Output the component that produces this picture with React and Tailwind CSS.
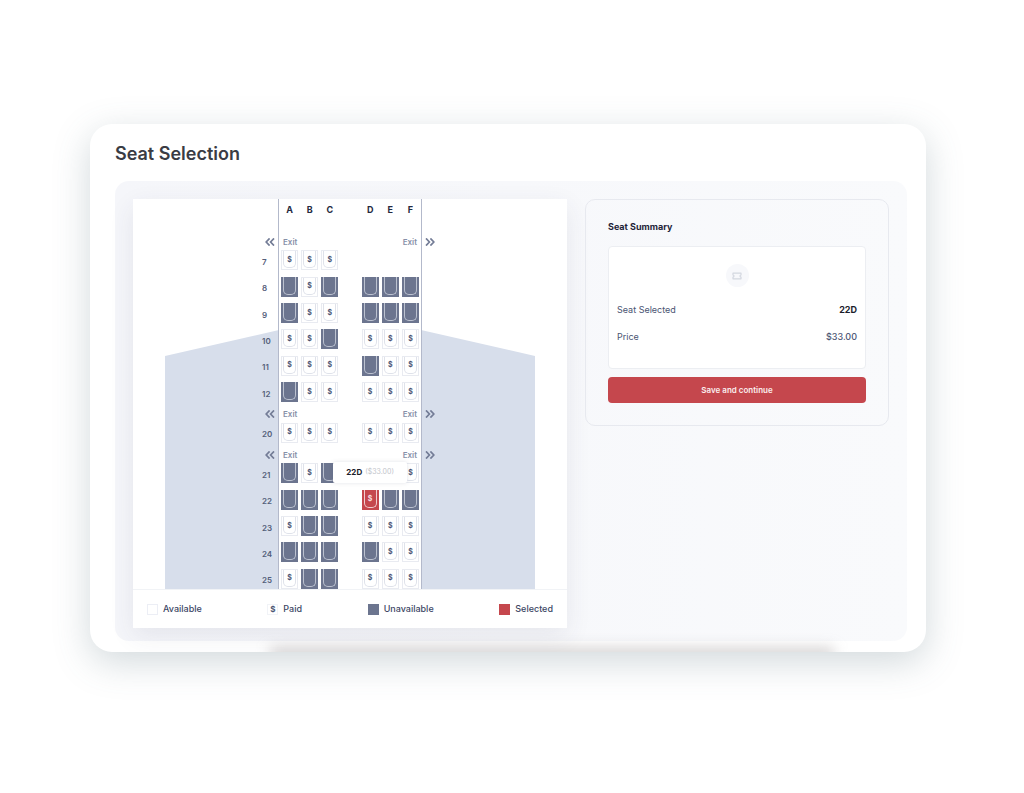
import React, { useState } from 'react';
import clsx from 'clsx';

const COLUMNS = ['A', 'B', 'C', null, 'D', 'E', 'F'];
const PRICE = '$33.00';

// p = paid, x = unavailable, - = no seat
const LAYOUT = [
  { exit: true },
  { row: 7, seats: 'ppp ---' },
  { row: 8, seats: 'xpx xxx' },
  { row: 9, seats: 'xpp xxx' },
  { row: 10, seats: 'ppx ppp' },
  { row: 11, seats: 'ppp xpp' },
  { row: 12, seats: 'xpp ppp' },
  { exit: true },
  { row: 20, seats: 'ppp ppp' },
  { exit: true },
  { row: 21, seats: 'xpx xpp' },
  { row: 22, seats: 'xxx pxx' },
  { row: 23, seats: 'pxx ppp' },
  { row: 24, seats: 'xxx xpp' },
  { row: 25, seats: 'pxx ppp' }
];

const LEGEND = [
  { label: 'Available', swatch: 'border border-[#eceef5] bg-white' },
  { label: 'Paid', swatch: 'border border-[#f1f3f7] bg-white text-[#4b5573]', symbol: '$' },
  { label: 'Unavailable', swatch: 'bg-[#6c758f]' },
  { label: 'Selected', swatch: 'bg-[#c5474d]' }
];

const Chevrons = ({ flip }) => (
  <svg viewBox="0 0 10 8" className={clsx('h-2 w-[10px] shrink-0', flip && 'rotate-180')} aria-hidden="true">
    <path d="M4.6 0.4 1.2 4l3.4 3.6M9 0.4 5.6 4 9 7.6" fill="none" stroke="#737c96" strokeWidth="1.7" />
  </svg>
);

const Wings = () => (
  <>
    <svg
      viewBox="0 0 114 259"
      preserveAspectRatio="none"
      className="absolute bottom-0 right-1/2 mr-[71px] h-[259px] w-[114px]"
      aria-hidden="true"
    >
      <path d="M0 26 114 0v259H0z" fill="#d7deeb" />
    </svg>
    <svg
      viewBox="0 0 114 259"
      preserveAspectRatio="none"
      className="absolute bottom-0 left-1/2 ml-[71px] h-[259px] w-[114px]"
      aria-hidden="true"
    >
      <path d="M0 0 114 26v233H0z" fill="#d7deeb" />
    </svg>
    <div className="absolute inset-y-0 left-1/2 w-[144px] -translate-x-1/2 border-x border-[#b3b9cb] bg-white" />
  </>
);

const SeatTooltip = ({ id }) => (
  <span className="absolute bottom-full left-1/2 z-10 mb-[7px] flex h-[21px] w-[74px] -translate-x-1/2 items-center justify-center gap-[3px] whitespace-nowrap rounded-xs bg-white text-[#1b1d2b] shadow-[0_0_4px_rgba(60,70,100,0.15)]">
    <span className="text-[8px] font-bold">{id}</span>
    <span className="text-[7px] text-[#c3c5cb]">({PRICE})</span>
  </span>
);

const Seat = ({ id, status, selected, onSelect }) => {
  if (status === '-') return <span className="w-[17px]" />;

  const taken = status === 'x';
  return (
    <button
      type="button"
      aria-label={`Seat ${id}`}
      aria-pressed={selected}
      disabled={taken}
      onClick={() => onSelect(id)}
      className={clsx(
        'relative flex h-5 w-[17px] justify-center',
        selected && 'bg-[#c5474d] text-[#f6dfe0]',
        taken && 'bg-[#6c758f]',
        !selected && !taken && 'border border-[#e9ebf1] bg-white text-[#4b5573]'
      )}
    >
      <span
        className={clsx(
          'flex w-[13px] shrink-0 items-center justify-center rounded-b-[5px] border-x border-b text-[7px] font-bold leading-none',
          selected && 'h-[18px] border-[#f0cdcf]',
          taken && 'h-[18px] border-[#bcc2d0]',
          !selected && !taken && 'h-[17px] border-[#dfe2ea]'
        )}
      >
        {!taken && '$'}
      </span>
      {selected && <SeatTooltip id={id} />}
    </button>
  );
};

const ExitRow = () => (
  <div className="grid h-2 grid-cols-[1fr_144px_1fr] pt-[2px] text-[8px] font-semibold leading-[8px] text-[#8790a8]">
    <div className="flex justify-end pr-[3px]">
      <Chevrons />
    </div>
    <div className="flex justify-between px-[5px]">
      <span>Exit</span>
      <span>Exit</span>
    </div>
    <div className="pl-[3px]">
      <Chevrons flip />
    </div>
  </div>
);

const SeatRow = ({ row, seats, selected, onSelect }) => (
  <div className="grid grid-cols-[1fr_144px_1fr]">
    <div className="flex items-center justify-end pr-1 pt-[3px]">
      <span className="w-3 text-[8px] font-semibold leading-none text-[#545e7a]">{row}</span>
    </div>
    <div className="flex justify-between px-[3px]">
      {COLUMNS.map((col, i) =>
        col ? (
          <Seat
            key={col}
            id={`${row}${col}`}
            status={seats[i]}
            selected={selected === `${row}${col}`}
            onSelect={onSelect}
          />
        ) : (
          <span key="aisle" className="w-[17px]" />
        )
      )}
    </div>
  </div>
);

const SeatMap = ({ selected, onSelect }) => (
  <section className="bg-white shadow-[0_8px_24px_rgba(60,60,90,0.09)]">
    <div className="relative flex h-[390px] flex-col overflow-hidden">
      <Wings />
      <div className="relative flex flex-1 flex-col">
        <div className="mx-auto flex h-[37px] w-[144px] justify-between px-[3px] pt-1 text-center text-[9px] font-bold leading-[14px] text-[#242a40]">
          {COLUMNS.map((col, i) => (
            <span key={i} className="w-[17px]">{col}</span>
          ))}
        </div>
        <div className="flex flex-1 flex-col justify-between">
          {LAYOUT.map((item, i) =>
            item.exit ? (
              <ExitRow key={i} />
            ) : (
              <SeatRow key={i} row={item.row} seats={item.seats} selected={selected} onSelect={onSelect} />
            )
          )}
        </div>
      </div>
    </div>
    <ul className="flex h-[39px] items-center justify-between border-t border-[#f1f3f6] px-[14px]">
      {LEGEND.map(({ label, swatch, symbol }) => (
        <li key={label} className="flex items-center gap-[5px] text-[9px] font-medium text-[#3c4664]">
          <span className={clsx('flex size-[11px] items-center justify-center text-[8px] font-bold leading-none', swatch)}>
            {symbol}
          </span>
          {label}
        </li>
      ))}
    </ul>
  </section>
);

const TicketIcon = () => (
  <svg viewBox="0 0 10 8" className="h-2 w-[10px]" aria-hidden="true">
    <path
      d="M1 1.2h8V3a1 1 0 0 0 0 2v1.8H1V5a1 1 0 0 0 0-2z"
      fill="none"
      stroke="#d3d7e0"
      strokeWidth="1.2"
      strokeLinejoin="round"
    />
  </svg>
);

const SeatSummary = ({ selected }) => (
  <aside className="self-start rounded-[10px] border border-[#e7e9ef] px-[22px] pb-[22px] pt-5">
    <h2 className="text-[9px] font-bold leading-[14px] text-[#1f2438]">Seat Summary</h2>
    <div className="mt-3 rounded-[4px] border border-[#eceef2] bg-white px-2 pb-[18px] pt-[17px]">
      <div className="mx-auto flex size-[23px] items-center justify-center rounded-full bg-[#f7f8fb]">
        <TicketIcon />
      </div>
      <dl className="mt-[9px] text-[9px] text-[#4a5472]">
        <div className="flex h-[27px] items-center justify-between">
          <dt>Seat Selected</dt>
          <dd className="font-bold text-[#1b1d2b]">{selected}</dd>
        </div>
        <div className="flex h-[27px] items-center justify-between">
          <dt>Price</dt>
          <dd className="font-medium">{PRICE}</dd>
        </div>
      </dl>
    </div>
    <button type="button" className="mt-2 h-[26px] w-full rounded-[4px] bg-[#c5474d] text-[8px] font-semibold text-[#fbeeee]">
      Save and continue
    </button>
  </aside>
);

const App = () => {
  const [selected, setSelected] = useState('22D');

  return (
    <div className="min-h-screen bg-white pb-20 pl-[90px] pr-[98px] pt-[124px] font-['Inter','Liberation_Sans',sans-serif]">
      <main className="relative overflow-hidden rounded-[22px] bg-white pb-[11px] pl-[25px] pr-[19px] pt-4 shadow-[0_10px_36px_rgba(80,108,118,0.26)]">
        <h1 className="text-[18px] font-semibold leading-7 text-[#3a3c44]">Seat Selection</h1>
        <div className="mt-[13px] grid grid-cols-[434fr_304fr] gap-[18px] rounded-[14px] bg-gradient-to-r from-[#f5f6fa] to-[#f9fafc] px-[18px] pb-[13px] pt-[18px]">
          <SeatMap selected={selected} onSelect={setSelected} />
          <SeatSummary selected={selected} />
        </div>
        <div className="absolute -bottom-2 left-[180px] right-[92px] h-3 bg-[#8c8484]/40 blur-[7px]" />
      </main>
    </div>
  );
};

export default App;
